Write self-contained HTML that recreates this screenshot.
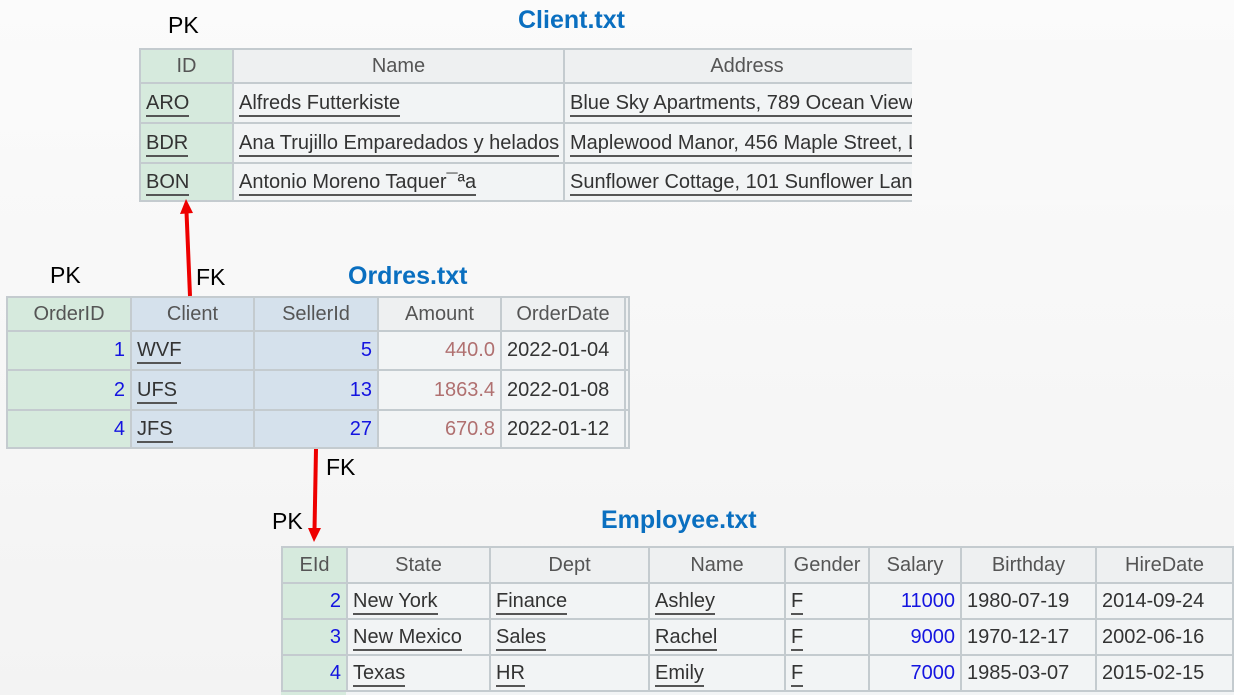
<!DOCTYPE html>
<html style="overflow:hidden;height:695px"><head><style>
*{margin:0;padding:0;box-sizing:border-box}
body{width:1234px;height:695px;overflow:hidden;background:linear-gradient(180deg,#fbfbfb,#f3f3f3);font-family:"Liberation Sans",sans-serif;position:relative}
.t{position:absolute;border-collapse:collapse;table-layout:fixed;font-size:20px;color:#333}
.t td{border:2px solid #c4cbcf;background:#f2f4f5;white-space:nowrap;overflow:hidden;padding:0 5px}
.t tr.h td{text-align:center;color:#555;background:#eef0f1}
.g{background:#d6eadd!important}
.b{background:#d5e1ec!important}
.r{text-align:right}
.n{color:#1414e0}
.a{color:#b07070}
u{text-decoration:none;border-bottom:2px solid #555;padding-bottom:1px}
.lbl{position:absolute;font-size:23px;color:#000}
.tt{position:absolute;font-size:25px;font-weight:bold;color:#0a6fc0}
</style></head><body>
<div class="lbl" style="left:168px;top:12px">PK</div>
<div class="tt" style="left:518px;top:6px">Client.txt</div>
<table class="t" style="left:139px;top:48px;width:790px">
<col style="width:93px"><col style="width:331px"><col style="width:366px">
<tr class="h" style="height:34px"><td class="g">ID</td><td>Name</td><td>Address</td></tr>
<tr style="height:40px"><td class="g"><u>ARO</u></td><td><u>Alfreds Futterkiste</u></td><td><u>Blue Sky Apartments, 789 Ocean View Way</u></td></tr>
<tr style="height:40px"><td class="g"><u>BDR</u></td><td><u>Ana Trujillo Emparedados y helados</u></td><td><u>Maplewood Manor, 456 Maple Street, Lexington</u></td></tr>
<tr style="height:38px"><td class="g"><u>BON</u></td><td><u>Antonio Moreno Taquer¯ªa</u></td><td><u>Sunflower Cottage, 101 Sunflower Lane</u></td></tr>
</table>
<div style="position:absolute;left:912px;top:40px;width:322px;height:165px;background:#f9f9f9"></div>

<div class="lbl" style="left:50px;top:262px">PK</div>
<div class="lbl" style="left:196px;top:264px">FK</div>
<div class="tt" style="left:348px;top:262px">Ordres.txt</div>
<table class="t" style="left:6px;top:296px;width:622px">
<col style="width:124px"><col style="width:123px"><col style="width:124px"><col style="width:123px"><col style="width:124px"><col style="width:4px">
<tr class="h" style="height:34px"><td class="g">OrderID</td><td class="b">Client</td><td class="b">SellerId</td><td>Amount</td><td>OrderDate</td><td></td></tr>
<tr style="height:39px"><td class="g r n">1</td><td class="b"><u>WVF</u></td><td class="b r n">5</td><td class="r a">440.0</td><td>2022-01-04</td><td></td></tr>
<tr style="height:40px"><td class="g r n">2</td><td class="b"><u>UFS</u></td><td class="b r n">13</td><td class="r a">1863.4</td><td>2022-01-08</td><td></td></tr>
<tr style="height:38px"><td class="g r n">4</td><td class="b"><u>JFS</u></td><td class="b r n">27</td><td class="r a">670.8</td><td>2022-01-12</td><td></td></tr>
</table>

<div class="lbl" style="left:326px;top:454px">FK</div>
<div class="lbl" style="left:272px;top:508px">PK</div>
<div class="tt" style="left:601px;top:506px">Employee.txt</div>
<table class="t" style="left:281px;top:546px;width:960px;font-size:20px">
<col style="width:65px"><col style="width:143px"><col style="width:159px"><col style="width:136px"><col style="width:84px"><col style="width:92px"><col style="width:135px"><col style="width:137px"><col style="width:9px">
<tr class="h" style="height:36px"><td class="g">EId</td><td>State</td><td>Dept</td><td>Name</td><td style="padding:0">Gender</td><td>Salary</td><td>Birthday</td><td>HireDate</td><td></td></tr>
<tr style="height:36px"><td class="g r n">2</td><td><u>New York</u></td><td><u>Finance</u></td><td><u>Ashley</u></td><td><u>F</u></td><td class="r n">11000</td><td>1980-07-19</td><td>2014-09-24</td><td></td></tr>
<tr style="height:36px"><td class="g r n">3</td><td><u>New Mexico</u></td><td><u>Sales</u></td><td><u>Rachel</u></td><td><u>F</u></td><td class="r n">9000</td><td>1970-12-17</td><td>2002-06-16</td><td></td></tr>
<tr style="height:36px"><td class="g r n">4</td><td><u>Texas</u></td><td><u>HR</u></td><td><u>Emily</u></td><td><u>F</u></td><td class="r n">7000</td><td>1985-03-07</td><td>2015-02-15</td><td></td></tr>
</table>
<div style="position:absolute;left:281px;top:690px;width:953px;height:5px;background:#f2f4f5;border-top:2px solid #c4cbcf"></div>
<div style="position:absolute;left:281px;top:690px;width:65px;height:5px;background:#d6eadd;border-top:2px solid #c4cbcf"></div>

<svg style="position:absolute;left:0;top:0" width="1234" height="695">
<line x1="190" y1="296" x2="186.5" y2="212" stroke="#e00" stroke-width="4"/>
<polygon points="186,199 180,214 193,213" fill="#e00"/>
<line x1="316" y1="449" x2="314.5" y2="530" stroke="#e00" stroke-width="4"/>
<polygon points="314,542 308,528 321,528" fill="#e00"/>
</svg>
</body></html>
